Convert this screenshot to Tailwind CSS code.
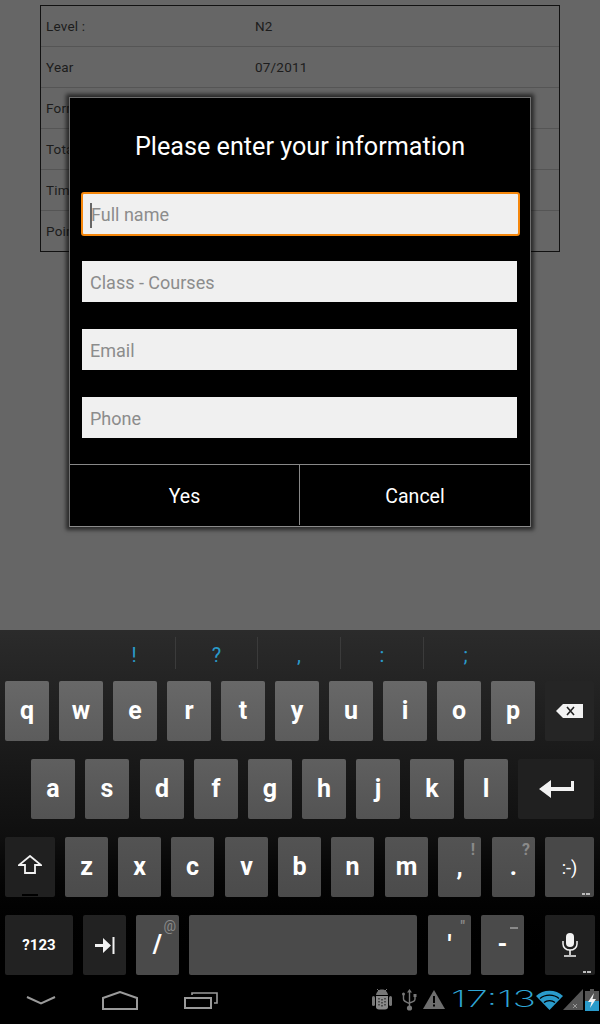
<!DOCTYPE html>
<html lang="en">
<head>
  <meta charset="UTF-8">
  <meta name="viewport" content="width=device-width, initial-scale=1.0">
  <title>Please enter your information</title>
  <script src="https://cdn.jsdelivr.net/npm/@tailwindcss/browser@4"></script>
</head>
<body class="relative w-[600px] h-[1024px] overflow-hidden bg-[#666666] font-['Roboto',sans-serif]">
  <!-- Dimmed page behind the dialog -->
  <main class="h-[630px] pt-[5px] pl-[40px]">
    <div class="w-[520px] border border-[#111] text-[13.5px] tracking-[0.2px] text-[#1c1c1c]">
      <div class="h-[41px] pl-[5px] border-b border-[#555] flex items-center"><span class="w-[209px]">Level :</span><span>N2</span></div>
      <div class="h-[41px] pl-[5px] border-b border-[#555] flex items-center"><span class="w-[209px]">Year</span><span>07/2011</span></div>
      <div class="h-[41px] pl-[5px] border-b border-[#555] flex items-center">Format</div>
      <div class="h-[41px] pl-[5px] border-b border-[#555] flex items-center">Total</div>
      <div class="h-[41px] pl-[5px] border-b border-[#555] flex items-center">Time</div>
      <div class="h-[40px] pl-[5px] flex items-center">Point</div>
    </div>
  </main>

  <!-- Dialog -->
  <section class="absolute top-[97px] left-[69px] w-[462px] h-[430px] bg-black border border-[#6e6e6e] border-b-[#8a8a8a] shadow-[0_0_4px_3px_rgba(0,0,0,0.6)] flex flex-col">
    <h2 class="h-[94px] pt-[4px] flex items-center justify-center text-[25.2px] text-white">Please enter your information</h2>
    <div class="relative ml-[11px] w-[439px] h-[44px] rounded-[3px] border-2 border-[#f5870c] bg-[#f0f0f0] flex items-center pl-[8px]">
      <input class="w-full bg-transparent outline-none text-[18px] placeholder:text-[#8c8c8c]" placeholder="Full name">
      <div class="absolute left-[7px] top-[9px] w-[1.5px] h-[25px] bg-[#666]"></div>
    </div>
    <input class="mt-[25px] ml-[12px] w-[435px] h-[41px] pl-[8px] pt-[2px] bg-[#f0f0f0] outline-none text-[18px] placeholder:text-[#8c8c8c]" placeholder="Class - Courses">
    <input class="mt-[27px] ml-[12px] w-[435px] h-[41px] pl-[8px] pt-[2px] bg-[#f0f0f0] outline-none text-[18px] placeholder:text-[#8c8c8c]" placeholder="Email">
    <input class="mt-[27px] ml-[12px] w-[435px] h-[41px] pl-[8px] pt-[2px] bg-[#f0f0f0] outline-none text-[18px] placeholder:text-[#8c8c8c]" placeholder="Phone">
    <div class="mt-[26px] h-[61px] border-t border-[#888] flex text-[19.5px] text-white">
      <div class="w-[230px] pt-[3px] border-r border-[#888] flex items-center justify-center">Yes</div>
      <div class="flex-1 pt-[3px] flex items-center justify-center">Cancel</div>
    </div>
  </section>

  <!-- Keyboard -->
  <section class="h-[345px] bg-gradient-to-b from-[#2b2b2b] via-[#0f0f0f] via-[60%] to-black text-white font-bold text-[25px]">
    <div class="h-[51px] pb-[6px] flex items-center text-[#2a9bcb] text-[20px] font-normal pl-[93px]">
      <div class="w-[83px] h-[32px] pt-[4px] border-r border-[#3b3b3b] flex items-center justify-center">!</div>
      <div class="w-[82px] h-[32px] pt-[4px] border-r border-[#3b3b3b] flex items-center justify-center">?</div>
      <div class="w-[83px] h-[32px] pt-[4px] border-r border-[#3b3b3b] flex items-center justify-center">,</div>
      <div class="w-[83px] h-[32px] pt-[4px] border-r border-[#3b3b3b] flex items-center justify-center">:</div>
      <div class="w-[83px] h-[32px] pt-[4px] flex items-center justify-center">;</div>
    </div>

    <div class="h-[60px] pl-[5px] flex gap-[10px]">
      <div class="w-[44px] rounded-[2px] bg-gradient-to-b from-[#686868] to-[#5c5c5c] flex items-center justify-center">q</div>
      <div class="w-[44px] rounded-[2px] bg-gradient-to-b from-[#686868] to-[#5c5c5c] flex items-center justify-center">w</div>
      <div class="w-[44px] rounded-[2px] bg-gradient-to-b from-[#686868] to-[#5c5c5c] flex items-center justify-center">e</div>
      <div class="w-[44px] rounded-[2px] bg-gradient-to-b from-[#686868] to-[#5c5c5c] flex items-center justify-center">r</div>
      <div class="w-[44px] rounded-[2px] bg-gradient-to-b from-[#686868] to-[#5c5c5c] flex items-center justify-center">t</div>
      <div class="w-[44px] rounded-[2px] bg-gradient-to-b from-[#686868] to-[#5c5c5c] flex items-center justify-center">y</div>
      <div class="w-[44px] rounded-[2px] bg-gradient-to-b from-[#686868] to-[#5c5c5c] flex items-center justify-center">u</div>
      <div class="w-[44px] rounded-[2px] bg-gradient-to-b from-[#686868] to-[#5c5c5c] flex items-center justify-center">i</div>
      <div class="w-[44px] rounded-[2px] bg-gradient-to-b from-[#686868] to-[#5c5c5c] flex items-center justify-center">o</div>
      <div class="w-[44px] rounded-[2px] bg-gradient-to-b from-[#686868] to-[#5c5c5c] flex items-center justify-center">p</div>
      <div class="w-[49px] rounded-[2px] bg-[#252525] flex items-center justify-center">
        <svg width="27" height="14" viewBox="0 0 27 14"><path d="M0 7L7 0H27V14H7Z" fill="#f2f2f2"/><path d="M11 3L18 11M18 3L11 11" stroke="#222" stroke-width="1.6"/></svg>
      </div>
    </div>

    <div class="h-[60px] mt-[18px] pl-[31px] flex gap-[10px]">
      <div class="w-[44px] rounded-[2px] bg-gradient-to-b from-[#5f5f5f] to-[#535353] flex items-center justify-center">a</div>
      <div class="w-[44px] rounded-[2px] bg-gradient-to-b from-[#5f5f5f] to-[#535353] flex items-center justify-center">s</div>
      <div class="w-[44px] ml-[1px] rounded-[2px] bg-gradient-to-b from-[#5f5f5f] to-[#535353] flex items-center justify-center">d</div>
      <div class="w-[44px] rounded-[2px] bg-gradient-to-b from-[#5f5f5f] to-[#535353] flex items-center justify-center">f</div>
      <div class="w-[44px] rounded-[2px] bg-gradient-to-b from-[#5f5f5f] to-[#535353] flex items-center justify-center">g</div>
      <div class="w-[44px] rounded-[2px] bg-gradient-to-b from-[#5f5f5f] to-[#535353] flex items-center justify-center">h</div>
      <div class="w-[44px] rounded-[2px] bg-gradient-to-b from-[#5f5f5f] to-[#535353] flex items-center justify-center">j</div>
      <div class="w-[44px] rounded-[2px] bg-gradient-to-b from-[#5f5f5f] to-[#535353] flex items-center justify-center">k</div>
      <div class="w-[44px] rounded-[2px] bg-gradient-to-b from-[#5f5f5f] to-[#535353] flex items-center justify-center">l</div>
      <div class="w-[76px] rounded-[2px] bg-[#202020] flex items-center justify-center">
        <svg width="35" height="18" viewBox="0 0 35 18"><path d="M0 9L12 0V7H32V1H35V11H12V18Z" fill="#f2f2f2"/></svg>
      </div>
    </div>

    <div class="h-[60px] mt-[18px] pl-[5px] flex gap-[10px]">
      <div class="relative w-[50px] rounded-[2px] bg-[#202020] flex items-center justify-center">
        <svg class="-mt-[6px]" width="24" height="19" viewBox="0 0 24 19"><path d="M12 1L23 10H17V18H7V10H1Z" fill="none" stroke="#f2f2f2" stroke-width="1.8"/></svg>
        <div class="absolute bottom-[1px] left-[17px] w-[16px] h-[2px] bg-black"></div>
      </div>
      <div class="w-[43px] rounded-[2px] bg-gradient-to-b from-[#535353] to-[#4b4b4b] flex items-center justify-center">z</div>
      <div class="w-[43px] rounded-[2px] bg-gradient-to-b from-[#535353] to-[#4b4b4b] flex items-center justify-center">x</div>
      <div class="w-[43px] rounded-[2px] bg-gradient-to-b from-[#535353] to-[#4b4b4b] flex items-center justify-center">c</div>
      <div class="w-[43px] ml-[1px] rounded-[2px] bg-gradient-to-b from-[#535353] to-[#4b4b4b] flex items-center justify-center">v</div>
      <div class="w-[43px] rounded-[2px] bg-gradient-to-b from-[#535353] to-[#4b4b4b] flex items-center justify-center">b</div>
      <div class="w-[43px] rounded-[2px] bg-gradient-to-b from-[#535353] to-[#4b4b4b] flex items-center justify-center">n</div>
      <div class="w-[43px] ml-[1px] rounded-[2px] bg-gradient-to-b from-[#535353] to-[#4b4b4b] flex items-center justify-center">m</div>
      <div class="relative w-[43px] rounded-[2px] bg-gradient-to-b from-[#535353] to-[#4b4b4b] flex items-center justify-center">,<span class="absolute top-[1px] right-[6px] text-[16px] text-[#8a8a8a]">!</span></div>
      <div class="relative w-[43px] ml-[1px] rounded-[2px] bg-gradient-to-b from-[#535353] to-[#4b4b4b] flex items-center justify-center">.<span class="absolute top-[1px] right-[5px] text-[16px] text-[#8a8a8a]">?</span></div>
      <div class="relative w-[49px] rounded-[2px] bg-[#484848] flex items-center justify-center font-normal text-[18px]">:-)
        <span class="absolute right-[4px] bottom-[2px] flex gap-[1px]"><span class="w-[3px] h-[2px] bg-[#bdbdbd]"></span><span class="w-[4px] h-[2px] bg-[#bdbdbd]"></span></span>
      </div>
    </div>

    <div class="h-[60px] mt-[18px] pl-[5px] flex gap-[10px]">
      <div class="w-[68px] rounded-[2px] bg-[#222222] flex items-center justify-center text-[15px]">?123</div>
      <div class="w-[43px] rounded-[2px] bg-[#222222] flex items-center justify-center">
        <svg width="20" height="17" viewBox="0 0 20 17"><path d="M0 7H8V1L16 8.5L8 16V10H0Z" fill="#f2f2f2"/><path d="M18.5 0V17" stroke="#f2f2f2" stroke-width="2"/></svg>
      </div>
      <div class="relative w-[43px] rounded-[2px] bg-[#4a4a4a] flex items-center justify-center">/<span class="absolute top-[1px] right-[3px] text-[14px] font-normal text-[#8a8a8a]">@</span></div>
      <div class="w-[228px] rounded-[2px] bg-[#4a4a4a]"></div>
      <div class="relative w-[43px] ml-[1px] rounded-[2px] bg-[#4a4a4a] flex items-center justify-center">'<span class="absolute top-[1px] right-[6px] text-[14px] text-[#8a8a8a]">"</span></div>
      <div class="relative w-[43px] rounded-[2px] bg-[#4a4a4a] flex items-center justify-center">-<span class="absolute top-[12px] right-[6px] w-[8px] h-[2px] bg-[#8a8a8a]"></span></div>
      <div class="relative w-[50px] ml-[11px] rounded-[2px] bg-[#202020] flex items-center justify-center">
        <svg class="-mt-[1px]" width="16" height="24" viewBox="0 0 16 24"><rect x="4" y="0" width="8" height="14" rx="4" fill="#f2f2f2"/><path d="M1 8V11C1 14.5 4 17 8 17C12 17 15 14.5 15 11V8" fill="none" stroke="#f2f2f2" stroke-width="1.5"/><path d="M8 17V22M2 23H14" stroke="#f2f2f2" stroke-width="1.6"/></svg>
        <span class="absolute right-[4px] bottom-[2px] flex gap-[1px]"><span class="w-[3px] h-[2px] bg-[#bdbdbd]"></span><span class="w-[4px] h-[2px] bg-[#bdbdbd]"></span></span>
      </div>
    </div>
  </section>

  <!-- System bar -->
  <footer class="h-[49px] bg-black flex items-center">
    <svg class="ml-[26px] mt-[2px]" width="30" height="9" viewBox="0 0 30 9"><path d="M1 1L15 7.5L29 1" fill="none" stroke="#9a9a9a" stroke-width="2"/></svg>
    <svg class="ml-[46px] mt-[1px]" width="36" height="19" viewBox="0 0 36 19"><path d="M1 7L18 1L35 7V18H1Z" fill="none" stroke="#9a9a9a" stroke-width="2"/></svg>
    <svg class="ml-[46px] mt-[1px]" width="34" height="18" viewBox="0 0 34 18"><path d="M1 7H27V17H1Z" fill="none" stroke="#9a9a9a" stroke-width="2"/><path d="M8 4V2H33V12H30" fill="none" stroke="#9a9a9a" stroke-width="1.6"/></svg>

    <svg class="ml-[154px]" width="20" height="23" viewBox="0 0 20 23"><path d="M4 7C4.5 3.5 7 1.5 10 1.5C13 1.5 15.5 3.5 16 7Z" fill="#777"/><path d="M5 1L7 3M15 1L13 3" stroke="#777"/><path d="M4 8H16V19C16 20.5 15 21.5 13 21.5H7C5 21.5 4 20.5 4 19Z" fill="#8a8a8a"/><rect x="0" y="8" width="3" height="10" rx="1.5" fill="#777"/><rect x="17" y="8" width="3" height="10" rx="1.5" fill="#777"/><path d="M7 10V19M10 11V20M13 10V18" stroke="#222" stroke-width="1.2" stroke-dasharray="1.5 1.5"/></svg>
    <svg class="ml-[10px]" width="15" height="22" viewBox="0 0 15 22"><path d="M7.5 2V18M1.5 6V10C1.5 12 3 12.5 7.5 14.5M13 8V10C13 12 12 12.5 7.5 14" fill="none" stroke="#777" stroke-width="1.4"/><path d="M7.5 0L10 3.5H5Z" fill="#777"/><circle cx="7.5" cy="19" r="2.6" fill="#777"/><circle cx="1.5" cy="5" r="1.5" fill="#777"/><rect x="11.5" y="5" width="3" height="3" fill="#777"/></svg>
    <svg class="ml-[6px]" width="22" height="19" viewBox="0 0 22 19"><path d="M11 0L22 19H0Z" fill="#6e6e6e"/><path d="M10 6H12V13H10ZM10 14.5H12V16.5H10Z" fill="#000"/></svg>
    <span class="ml-[6px] w-[85px] shrink-0 font-['Inter',sans-serif] font-extralight text-[23px] leading-none text-[#2fa6d6] origin-left scale-x-[1.72] whitespace-nowrap">17:13</span>
    <svg class="ml-[0px]" width="27" height="20" viewBox="0 0 27 20"><path d="M0 6C7 -1 20 -1 27 6L13.5 20Z" fill="#2a9bcb"/><path d="M4 8.5C9 4 18 4 23 8.5M8 12.5C11 10 16 10 19 12.5" fill="none" stroke="#000" stroke-width="1.3"/></svg>
    <svg class="ml-[0px]" width="20" height="21" viewBox="0 0 20 21"><path d="M20 0V21H0Z" fill="#555"/><path d="M10 15L14 19M14 15L10 19" stroke="#999" stroke-width="1"/></svg>
    <svg class="ml-[2px]" width="14" height="22" viewBox="0 0 14 22"><path d="M5 0H9V2H14V22H0V2H5Z" fill="#555"/><rect x="0" y="12" width="14" height="10" fill="#2a9bcb"/><path d="M9 4L3 13H6.5L5 19L11 10H7.5Z" fill="#f2f2f2"/></svg>
  </footer>
</body>
</html>
